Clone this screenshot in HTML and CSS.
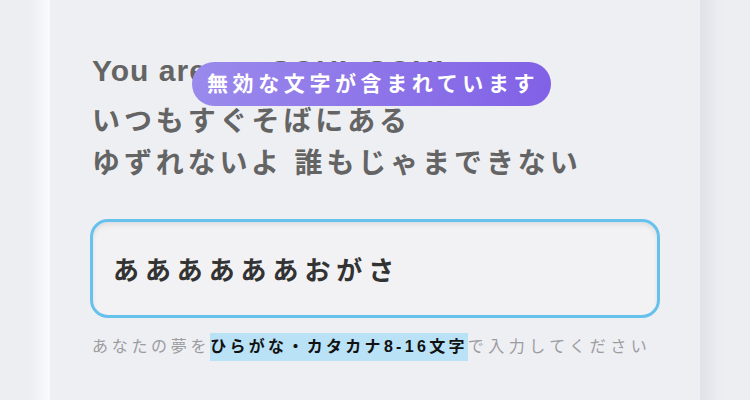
FILE: index.html
```html
<!DOCTYPE html>
<html lang="ja">
<head>
<meta charset="utf-8">
<link rel="stylesheet" href="styles.css">
</head>
<body>
<div class="page">
  <section class="card">
    <div class="lyrics">
      <p class="line latin">You are my SOUL SOUL</p>
      <p class="line">いつもすぐそばにある</p>
      <p class="line">ゆずれないよ 誰もじゃまできない</p>
      <div class="toast">無効な文字が含まれています</div>
    </div>
    <div class="field">
      <span class="value">ああああああおがさ</span>
    </div>
    <p class="hint">あなたの夢を<mark class="hl">ひらがな・カタカナ8-16文字</mark><span class="tail">で入力してください</span></p>
  </section>
</div>
</body>
</html>
```
FILE: styles.css
```css
html, body {
  margin: 0;
  padding: 0;
  background: #eceef2;
  font-family: "Liberation Sans", "Noto Sans CJK JP", sans-serif;
}
.page {
  width: 750px;
  height: 400px;
  overflow: hidden;
  display: flex;
  justify-content: center;
}
.card {
  width: 650px;
  height: 440px;
  margin-top: -20px;
  box-sizing: border-box;
  padding: 76px 40px 0 42px;
  background: #eeeff3;
  box-shadow: -10px 0 12px #fbfbfd, 10px 0 14px #dfe1e8;
}
.lyrics {
  position: relative;
}
.line {
  margin: 0;
  font-size: 28px;
  line-height: 42px;
  font-weight: bold;
  color: #646464;
  letter-spacing: 3.9px;
  white-space: nowrap;
}
.line.latin {
  letter-spacing: 1px;
  font-size: 30px;
  line-height: 30px;
  margin-bottom: 15px;
}
.toast {
  position: absolute;
  left: 100px;
  top: 6px;
  height: 44px;
  padding: 0 12px 0 15px;
  border-radius: 22px;
  background: linear-gradient(90deg, #9a8aec, #8161e6);
  color: #ffffff;
  font-size: 21px;
  font-weight: bold;
  letter-spacing: 4.6px;
  line-height: 44px;
  white-space: nowrap;
}
.field {
  margin-top: 34px;
  margin-left: -2px;
  height: 99px;
  box-sizing: border-box;
  border: 3px solid #66c1ec;
  border-radius: 18px;
  background: #f2f2f4;
  box-shadow: inset 0 3px 4px rgba(0, 0, 0, 0.08);
  display: flex;
  align-items: center;
  padding-left: 20px;
}
.value {
  font-size: 26px;
  font-weight: bold;
  color: #333333;
  letter-spacing: 5.9px;
}
.hint {
  margin: 15px 0 0;
  font-size: 16px;
  line-height: 28px;
  color: #9c9c9f;
  letter-spacing: 3.7px;
  white-space: nowrap;
}
.hl {
  display: inline-block;
  line-height: 28px;
  background: #b9e2f6;
  color: #111111;
  font-weight: bold;
  letter-spacing: 3.3px;
}
.tail {
  letter-spacing: 4.5px;
}
```
